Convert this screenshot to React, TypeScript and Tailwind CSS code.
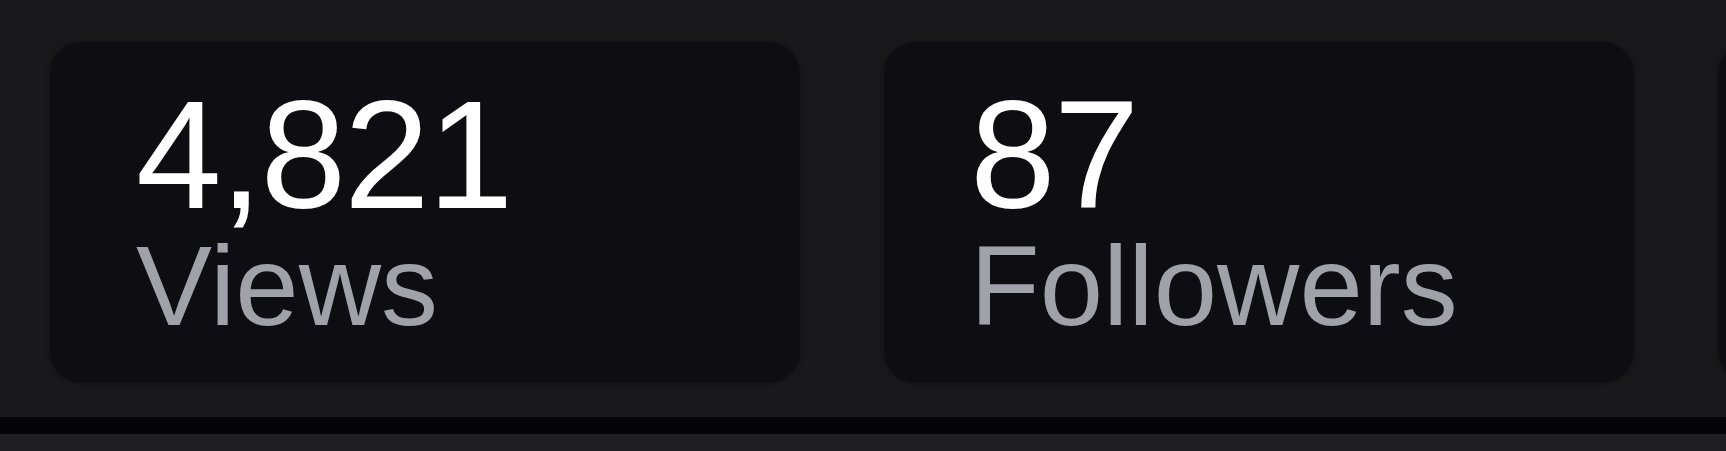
type Stat = {
  value: string;
  label: string;
};

const stats: Stat[] = [
  { value: "4,821", label: "Views" },
  { value: "87", label: "Followers" },
];

function StatCard({ stat }: { stat: Stat }) {
  return (
    <div className="flex w-[750px] shrink-0 flex-col rounded-[32px] bg-[#0e0d11] px-[86px] pt-[48px] pb-[47px] shadow-[0_0_6px_rgba(0,0,0,0.35)]">
      <span className="text-[154px] leading-[130px] font-normal tracking-[-2px] text-white">
        {stat.value}
      </span>
      <span className="mt-[16px] text-[114px] leading-[100px] font-normal text-[#a1a1aa]">
        {stat.label}
      </span>
    </div>
  );
}

export default function App() {
  return (
    <div
      className="flex h-[451px] w-full flex-col overflow-hidden bg-[#19191c]"
      style={{ fontFamily: '"Liberation Sans", Arial, sans-serif' }}
    >
      <div className="flex gap-[84px] pt-[42px] pl-[50px]">
        {stats.map((stat) => (
          <StatCard key={stat.label} stat={stat} />
        ))}
        {/* next card in the row, scrolled past the edge */}
        <div className="h-[341px] w-[750px] shrink-0 rounded-[32px] bg-[#0e0d11] shadow-[0_0_6px_rgba(0,0,0,0.35)]" />
      </div>
      <div className="mt-[34px] h-[17px] shrink-0 bg-[#050407]" />
      <div className="flex-1 bg-[#1f1e22]" />
    </div>
  );
}
